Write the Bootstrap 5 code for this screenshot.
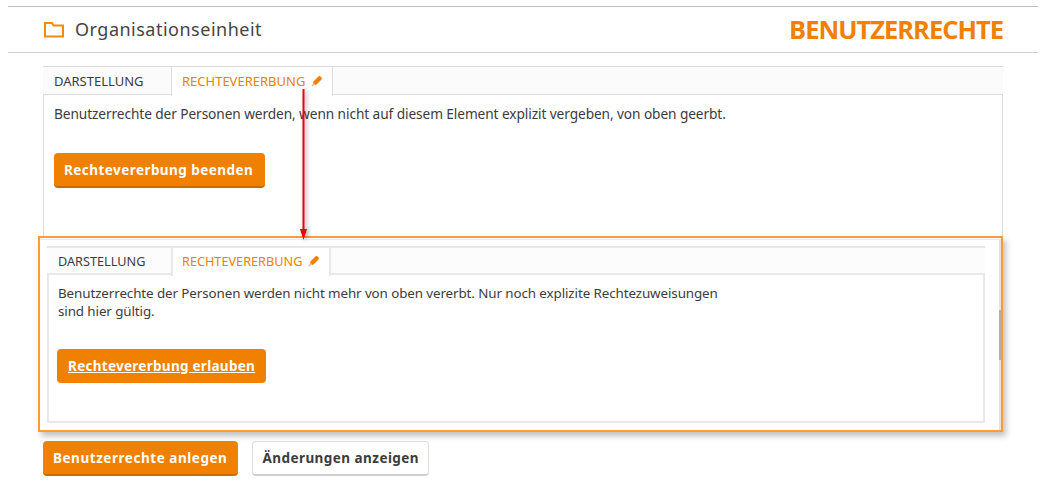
<!DOCTYPE html>
<html lang="de">
<head>
<meta charset="utf-8">
<title>Benutzerrechte</title>
<link href="https://cdn.jsdelivr.net/npm/bootstrap@5.3.0/dist/css/bootstrap.min.css" rel="stylesheet">
<style>
html,body{height:483px;overflow:hidden;background:#fff}
body{font-family:"Noto Sans","Open Sans",sans-serif;font-size:14px;color:#3c3c3c;position:relative}
.head-bar{margin:6px 9px 0 8px;height:47px;border-top:1px solid #bcbcbc;border-bottom:1px solid #cfcfcf;padding:0 35px 0 36px}
.head-name{font-size:18px;letter-spacing:.5px;color:#444;margin-left:3px}
.head-title{font-family:"Open Sans",sans-serif;font-size:25.5px;font-weight:700;color:#f28000;letter-spacing:-1px}
.tab-wrap{margin:13px 44px 0 43px;height:364px}
.tab-strip{height:29px;background:#fbfbfb;border-top:1px solid #dcdcdc}
.tab-item{font-size:13px;padding:0 0 0 11px;width:128px;height:28px;line-height:29px;white-space:nowrap;letter-spacing:0}
.tab-on{background:#fff;color:#f28000;border:solid #dcdcdc;border-width:0 1px;margin-bottom:-1px;height:29px;width:162px;padding-left:10px;position:relative;z-index:1}
.tab-body{border:1px solid #dcdcdc;height:336px;padding:9px 10px;margin-top:-1px}
.body-text{margin:0;line-height:20px;font-size:13.7px;letter-spacing:-.09px}
.act-btn{font-size:13.5px;font-weight:700;letter-spacing:.45px;background:#f08000;color:#fff;border:0;border-bottom:2px solid #c96c00;border-radius:4px;padding:0 12px 0 10px;height:35px;line-height:35px;white-space:nowrap}
.act-btn:hover{background:#f08000;color:#fff}
.first-btn{margin-top:29px}
.overlay-box{position:absolute;left:38px;top:236px;width:965px;height:196px;border:2px solid #ff9a38;background:#fff;box-shadow:3px 4px 6px rgba(0,0,0,.25);padding:8px 16px 8px 7px}
.overlay-box::before{content:"";position:absolute;left:0;right:0;top:1px;bottom:0;border-top:1px solid #ececec;border-right:2px solid #e2e2e2}
.overlay-box::after{content:"";position:absolute;right:0;top:72px;width:2px;height:50px;background:#b0b0b0}
.ov-strip{height:28px;background:#fcfcfc;border-top:2px solid #e8e8e8;position:relative}
.ov-strip .tab-item{height:26px;line-height:27px;font-size:12.7px;width:124px;padding-left:11px}
.ov-strip .tab-on{height:28px;border-color:#e8e8e8;border-width:0 2px;width:160px;padding-left:9px}
.ov-body{border:2px solid #e8e8e8;height:150px;padding:9px 9px;margin-top:-1px;position:relative}
.ov-body p{max-width:680px;font-size:13.4px;line-height:18px;letter-spacing:-.1px}
.ov-btn{margin-top:29px;border-bottom:0;height:34px;text-decoration:underline;line-height:35px;margin-left:-1px;letter-spacing:.28px;padding:0 11px}
.foot-row{position:absolute;left:43px;top:441px;gap:14px}
.foot-first{letter-spacing:.54px;padding-right:11px}
.ghost-btn{background:#fff;color:#3c3c3c;border:1px solid #ddd;border-bottom:2px solid #d0d0d0;border-radius:4px;font-size:13.5px;font-weight:700;letter-spacing:.45px;padding:0 9px;height:35px;line-height:33px;white-space:nowrap}
.arrow-svg{position:absolute;left:297px;top:88px;overflow:visible;z-index:5;filter:drop-shadow(2px 1px 2px rgba(0,0,0,.35))}
.pin{margin-left:6px;vertical-align:-1px}
</style>
</head>
<body>
<header class="head-bar d-flex align-items-center justify-content-between">
  <div class="d-flex align-items-center gap-2">
    <svg width="20" height="16" viewBox="0 0 20 16" fill="none" stroke="#f28a10" stroke-width="2" aria-hidden="true"><path d="M1 14.500V1h7l1.500 2.500H19v11z"/></svg>
    <span class="head-name">Organisationseinheit</span>
  </div>
  <div class="head-title">BENUTZERRECHTE</div>
</header>
<main class="tab-wrap">
  <div class="tab-strip d-flex">
    <div class="tab-item">DARSTELLUNG</div>
    <div class="tab-item tab-on">RECHTEVERERBUNG<svg class="pin" width="11" height="11" viewBox="0 0 11 11"><path d="M8.500 2.500 4.500 6.500" stroke="#f28000" stroke-width="4.500" stroke-linecap="round"/><path d="M3.500 7.500 1 10" stroke="#f8b060" stroke-width="1.500"/></svg></div>
  </div>
  <div class="tab-body">
    <p class="body-text">Benutzerrechte der Personen werden, wenn nicht auf diesem Element explizit vergeben, von oben geerbt.</p>
    <button class="btn act-btn first-btn" type="button">Rechtevererbung beenden</button>
  </div>
</main>
<section class="overlay-box">
  <div class="ov-strip d-flex">
    <div class="tab-item">DARSTELLUNG</div>
    <div class="tab-item tab-on">RECHTEVERERBUNG<svg class="pin" width="11" height="11" viewBox="0 0 11 11"><path d="M8.500 2.500 4.500 6.500" stroke="#f28000" stroke-width="4.500" stroke-linecap="round"/><path d="M3.500 7.500 1 10" stroke="#f8b060" stroke-width="1.500"/></svg></div>
  </div>
  <div class="ov-body">
    <p class="body-text">Benutzerrechte der Personen werden nicht mehr von oben vererbt. Nur noch explizite Rechtezuweisungen sind hier gültig.</p>
    <button class="btn act-btn ov-btn" type="button">Rechtevererbung erlauben</button>
  </div>
</section>
<svg class="arrow-svg" width="14" height="152" viewBox="0 0 14 152" aria-hidden="true"><path d="M6.500 1V142" stroke="#ee0008" stroke-width="2"/><path d="M3 141h7L6.500 152z" fill="#ee0008"/></svg>
<div class="foot-row d-flex">
  <button class="btn act-btn foot-first" type="button">Benutzerrechte anlegen</button>
  <button class="btn ghost-btn" type="button">Änderungen anzeigen</button>
</div>
<script src="https://cdn.jsdelivr.net/npm/bootstrap@5.3.0/dist/js/bootstrap.bundle.min.js"></script>
</body>
</html>
